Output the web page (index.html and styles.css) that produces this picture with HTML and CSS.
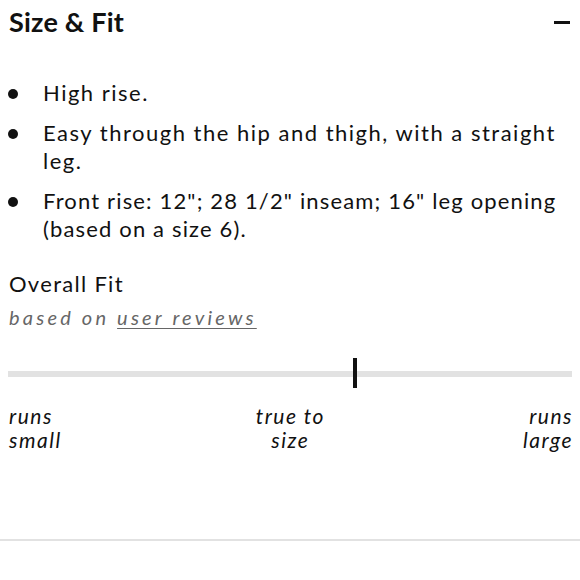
FILE: index.html
```html
<!DOCTYPE html>
<html>
<head>
<meta charset="utf-8">
<link rel="stylesheet" href="styles.css">
</head>
<body>
<section class="panel">
  <header class="head">
    <h2 class="title">Size &amp; Fit</h2>
    <span class="minus"></span>
  </header>
  <ul class="list">
    <li>High rise.</li>
    <li>Easy through the hip and thigh, with a straight leg.</li>
    <li class="tight">Front rise: 12"; 28 1/2" inseam; 16" leg opening (based on a size 6).</li>
  </ul>
  <div class="fit">
    <h3 class="fit-title">Overall Fit</h3>
    <p class="fit-sub">based on <a class="link">user reviews</a></p>
    <div class="track">
      <span class="marker" style="left: 61.2%"></span>
    </div>
    <div class="labels">
      <span class="lab lab-left">runs<br>small</span>
      <span class="lab lab-mid">true to<br>size</span>
      <span class="lab lab-right">runs<br>large</span>
    </div>
  </div>
</section>
<div class="rule"></div>
</body>
</html>
```
FILE: styles.css
```css
* { box-sizing: border-box; }
html, body { margin: 0; padding: 0; background: #fff; }
body {
  font-family: Lato, "Open Sans", sans-serif;
  color: #111;
  width: 580px;
  height: 580px;
  overflow: hidden;
}
.panel { padding: 0 8px; height: 539px; }
.head {
  display: flex;
  justify-content: space-between;
  align-items: center;
  height: 43px;
}
.title {
  margin: 0;
  font-size: 27px;
  font-weight: 700;
  letter-spacing: 0.2px;
  line-height: 43px;
  padding-left: 1px;
}
.minus {
  display: block;
  width: 16px;
  height: 3px;
  background: #111;
  margin-right: 2px;
  margin-top: 1px;
}
.list {
  list-style: none;
  margin: 36px 0 0 0;
  padding: 0;
}
.list li {
  position: relative;
  padding-left: 35px;
  font-size: 22px;
  line-height: 28px;
  letter-spacing: 1.5px;
  margin-bottom: 12px;
}
.list li.tight { letter-spacing: 1.15px; }
.list li:last-child { margin-bottom: 0; }
.list li::before {
  content: "";
  position: absolute;
  left: 0;
  top: 10px;
  width: 10px;
  height: 10px;
  border-radius: 50%;
  background: #111;
}
.fit { margin-top: 26px; }
.fit-title {
  margin: 0;
  font-size: 22px;
  font-weight: 400;
  line-height: 30px;
  letter-spacing: 1.3px;
  padding-left: 1px;
}
.fit-sub {
  margin: 4px 0 0 0;
  font-size: 20px;
  font-style: italic;
  color: #666;
  letter-spacing: 3.2px;
  line-height: 28px;
  padding-left: 1px;
}
.link { color: #666; text-decoration: underline; text-underline-offset: 3px; text-decoration-thickness: 1px; }
.track {
  position: relative;
  margin-top: 40px;
  height: 6px;
  background: #e2e2e2;
}
.marker {
  position: absolute;
  top: -13px;
  width: 4px;
  height: 30px;
  background: #111;
}
.labels {
  display: flex;
  justify-content: space-between;
  margin-top: 27px;
  font-style: italic;
  font-size: 21px;
  line-height: 24px;
  letter-spacing: 1.5px;
}
.lab-left { text-align: left; padding-left: 1px; }
.lab-mid { text-align: center; margin-right: 4px; }
.lab-right { text-align: right; margin-right: -1px; }
.rule { height: 2px; background: #e2e2e2; width: 580px; }
```
